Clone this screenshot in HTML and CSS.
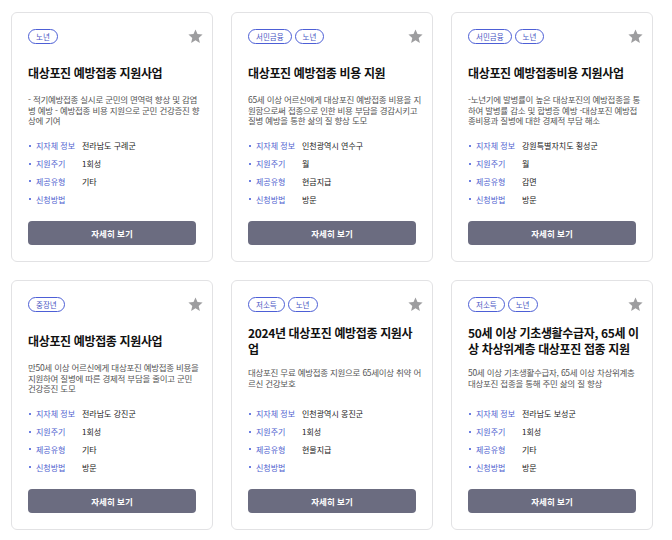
FILE: index.html
```html
<!DOCTYPE html>
<html lang="ko">
<head>
<meta charset="utf-8">
<title>지원사업 목록</title>
<link rel="stylesheet" href="styles.css">
</head>
<body>
<main class="grid">
  <article class="card">
    <div class="card-head">
      <div class="tags"><span class="tag">노년</span></div>
      <svg class="star" viewBox="0 0 24 24"><path d="M12 17.27L18.18 21l-1.64-7.03L22 9.24l-7.19-.61L12 2 9.19 8.63 2 9.24l5.46 4.73L5.82 21z"/></svg>
    </div>
    <div class="title-box"><h2 class="title">대상포진 예방접종 지원사업</h2></div>
    <div class="desc-box"><p class="desc">- 적기예방접종 실시로 군민의 면역력 향상 및 감염<br>병 예방 - 예방접종 비용 지원으로 군민 건강증진 향<br>상에 기여</p></div>
    <ul class="info">
      <li><span class="label">지자체 정보</span><span class="value">전라남도 구례군</span></li>
      <li><span class="label">지원주기</span><span class="value">1회성</span></li>
      <li><span class="label">제공유형</span><span class="value">기타</span></li>
      <li><span class="label">신청방법</span><span class="value"></span></li>
    </ul>
    <button class="btn">자세히 보기</button>
  </article>

  <article class="card">
    <div class="card-head">
      <div class="tags"><span class="tag">서민금융</span><span class="tag">노년</span></div>
      <svg class="star" viewBox="0 0 24 24"><path d="M12 17.27L18.18 21l-1.64-7.03L22 9.24l-7.19-.61L12 2 9.19 8.63 2 9.24l5.46 4.73L5.82 21z"/></svg>
    </div>
    <div class="title-box"><h2 class="title">대상포진 예방접종 비용 지원</h2></div>
    <div class="desc-box"><p class="desc">65세 이상 어르신에게 대상포진 예방접종 비용을 지<br>원함으로써 접종으로 인한 비용 부담을 경감시키고<br>질병 예방을 통한 삶의 질 향상 도모</p></div>
    <ul class="info">
      <li><span class="label">지자체 정보</span><span class="value">인천광역시 연수구</span></li>
      <li><span class="label">지원주기</span><span class="value">월</span></li>
      <li><span class="label">제공유형</span><span class="value">현금지급</span></li>
      <li><span class="label">신청방법</span><span class="value">방문</span></li>
    </ul>
    <button class="btn">자세히 보기</button>
  </article>

  <article class="card">
    <div class="card-head">
      <div class="tags"><span class="tag">서민금융</span><span class="tag">노년</span></div>
      <svg class="star" viewBox="0 0 24 24"><path d="M12 17.27L18.18 21l-1.64-7.03L22 9.24l-7.19-.61L12 2 9.19 8.63 2 9.24l5.46 4.73L5.82 21z"/></svg>
    </div>
    <div class="title-box"><h2 class="title">대상포진 예방접종비용 지원사업</h2></div>
    <div class="desc-box"><p class="desc">-노년기에 발병률이 높은 대상포진의 예방접종을 통<br>하여 발병률 감소 및 합병증 예방 -대상포진 예방접<br>종비용과 질병에 대한 경제적 부담 해소</p></div>
    <ul class="info">
      <li><span class="label">지자체 정보</span><span class="value">강원특별자치도 횡성군</span></li>
      <li><span class="label">지원주기</span><span class="value">월</span></li>
      <li><span class="label">제공유형</span><span class="value">감면</span></li>
      <li><span class="label">신청방법</span><span class="value">방문</span></li>
    </ul>
    <button class="btn">자세히 보기</button>
  </article>

  <article class="card">
    <div class="card-head">
      <div class="tags"><span class="tag">중장년</span></div>
      <svg class="star" viewBox="0 0 24 24"><path d="M12 17.27L18.18 21l-1.64-7.03L22 9.24l-7.19-.61L12 2 9.19 8.63 2 9.24l5.46 4.73L5.82 21z"/></svg>
    </div>
    <div class="title-box"><h2 class="title">대상포진 예방접종 지원사업</h2></div>
    <div class="desc-box"><p class="desc">만50세 이상 어르신에게 대상포진 예방접종 비용을<br>지원하여 질병에 따른 경제적 부담을 줄이고 군민<br>건강증진 도모</p></div>
    <ul class="info">
      <li><span class="label">지자체 정보</span><span class="value">전라남도 강진군</span></li>
      <li><span class="label">지원주기</span><span class="value">1회성</span></li>
      <li><span class="label">제공유형</span><span class="value">기타</span></li>
      <li><span class="label">신청방법</span><span class="value">방문</span></li>
    </ul>
    <button class="btn">자세히 보기</button>
  </article>

  <article class="card">
    <div class="card-head">
      <div class="tags"><span class="tag">저소득</span><span class="tag">노년</span></div>
      <svg class="star" viewBox="0 0 24 24"><path d="M12 17.27L18.18 21l-1.64-7.03L22 9.24l-7.19-.61L12 2 9.19 8.63 2 9.24l5.46 4.73L5.82 21z"/></svg>
    </div>
    <div class="title-box"><h2 class="title">2024년 대상포진 예방접종 지원사<br>업</h2></div>
    <div class="desc-box"><p class="desc">대상포진 무료 예방접종 지원으로 65세이상 취약 어<br>르신 건강보호</p></div>
    <ul class="info">
      <li><span class="label">지자체 정보</span><span class="value">인천광역시 옹진군</span></li>
      <li><span class="label">지원주기</span><span class="value">1회성</span></li>
      <li><span class="label">제공유형</span><span class="value">현물지급</span></li>
      <li><span class="label">신청방법</span><span class="value"></span></li>
    </ul>
    <button class="btn">자세히 보기</button>
  </article>

  <article class="card">
    <div class="card-head">
      <div class="tags"><span class="tag">저소득</span><span class="tag">노년</span></div>
      <svg class="star" viewBox="0 0 24 24"><path d="M12 17.27L18.18 21l-1.64-7.03L22 9.24l-7.19-.61L12 2 9.19 8.63 2 9.24l5.46 4.73L5.82 21z"/></svg>
    </div>
    <div class="title-box"><h2 class="title">50세 이상 기초생활수급자, 65세 이<br>상 차상위계층 대상포진 접종 지원</h2></div>
    <div class="desc-box"><p class="desc">50세 이상 기초생활수급자, 65세 이상 차상위계층<br>대상포진 접종을 통해 주민 삶의 질 향상</p></div>
    <ul class="info">
      <li><span class="label">지자체 정보</span><span class="value">전라남도 보성군</span></li>
      <li><span class="label">지원주기</span><span class="value">1회성</span></li>
      <li><span class="label">제공유형</span><span class="value">기타</span></li>
      <li><span class="label">신청방법</span><span class="value">방문</span></li>
    </ul>
    <button class="btn">자세히 보기</button>
  </article>
</main>
</body>
</html>
```
FILE: styles.css
```css
* { box-sizing: border-box; }
html, body { margin: 0; padding: 0; background: #fff; }
body {
  font-family: "Noto Sans CJK KR", "Noto Sans", sans-serif;
  color: #222;
}
.grid {
  display: grid;
  grid-template-columns: repeat(3, 202px);
  column-gap: 18px;
  row-gap: 18px;
  padding: 12px 11px;
}
.card {
  height: 250px;
  border: 1px solid #e2e2e4;
  border-radius: 6px;
  padding: 16px;
  display: flex;
  flex-direction: column;
  background: #fff;
}
.card-head {
  display: flex;
  justify-content: space-between;
  align-items: flex-start;
  height: 15px;
}
.tags { display: flex; gap: 3px; }
.tag {
  display: inline-block;
  height: 15px;
  line-height: 13px;
  padding: 0 7px;
  border: 1px solid #4d5fd6;
  border-radius: 8px;
  font-size: 7.5px;
  color: #4a56c4;
}
.star {
  width: 17px;
  height: 17px;
  fill: #9d9d9f;
  margin-top: -1px;
  margin-right: -8px;
}
.title-box {
  margin-top: 12px;
  height: 33px;
  display: flex;
  align-items: center;
}
.title {
  margin: 0;
  font-size: 12px;
  line-height: 16px;
  font-weight: 700;
  color: #111;
  letter-spacing: -0.35px;
  white-space: nowrap;
}
.desc-box {
  margin-top: 4px;
  height: 34px;
  display: flex;
  align-items: center;
}
.desc {
  margin: 0;
  font-size: 8.5px;
  line-height: 10.7px;
  color: #555;
  letter-spacing: -0.3px;
  word-spacing: 0.2px;
  white-space: nowrap;
}
.info {
  list-style: none;
  margin: 10px 0 0;
  padding: 0;
}
.info li {
  display: flex;
  align-items: center;
  height: 17.75px;
  font-size: 8px;
}
.info li::before {
  content: "";
  width: 2px;
  height: 2px;
  border-radius: 50%;
  background: #3b55d8;
  margin: 0 5px 0 1px;
  flex: none;
}
.label {
  width: 46px;
  flex: none;
  color: #4f5fcf;
}
.value { color: #222; }
.btn {
  margin-top: 13px;
  height: 24px;
  width: 100%;
  border: 0;
  border-radius: 4px;
  background: #6b6c80;
  color: #fff;
  font-family: inherit;
  font-size: 8.5px;
  font-weight: 700;
  cursor: pointer;
}
```
